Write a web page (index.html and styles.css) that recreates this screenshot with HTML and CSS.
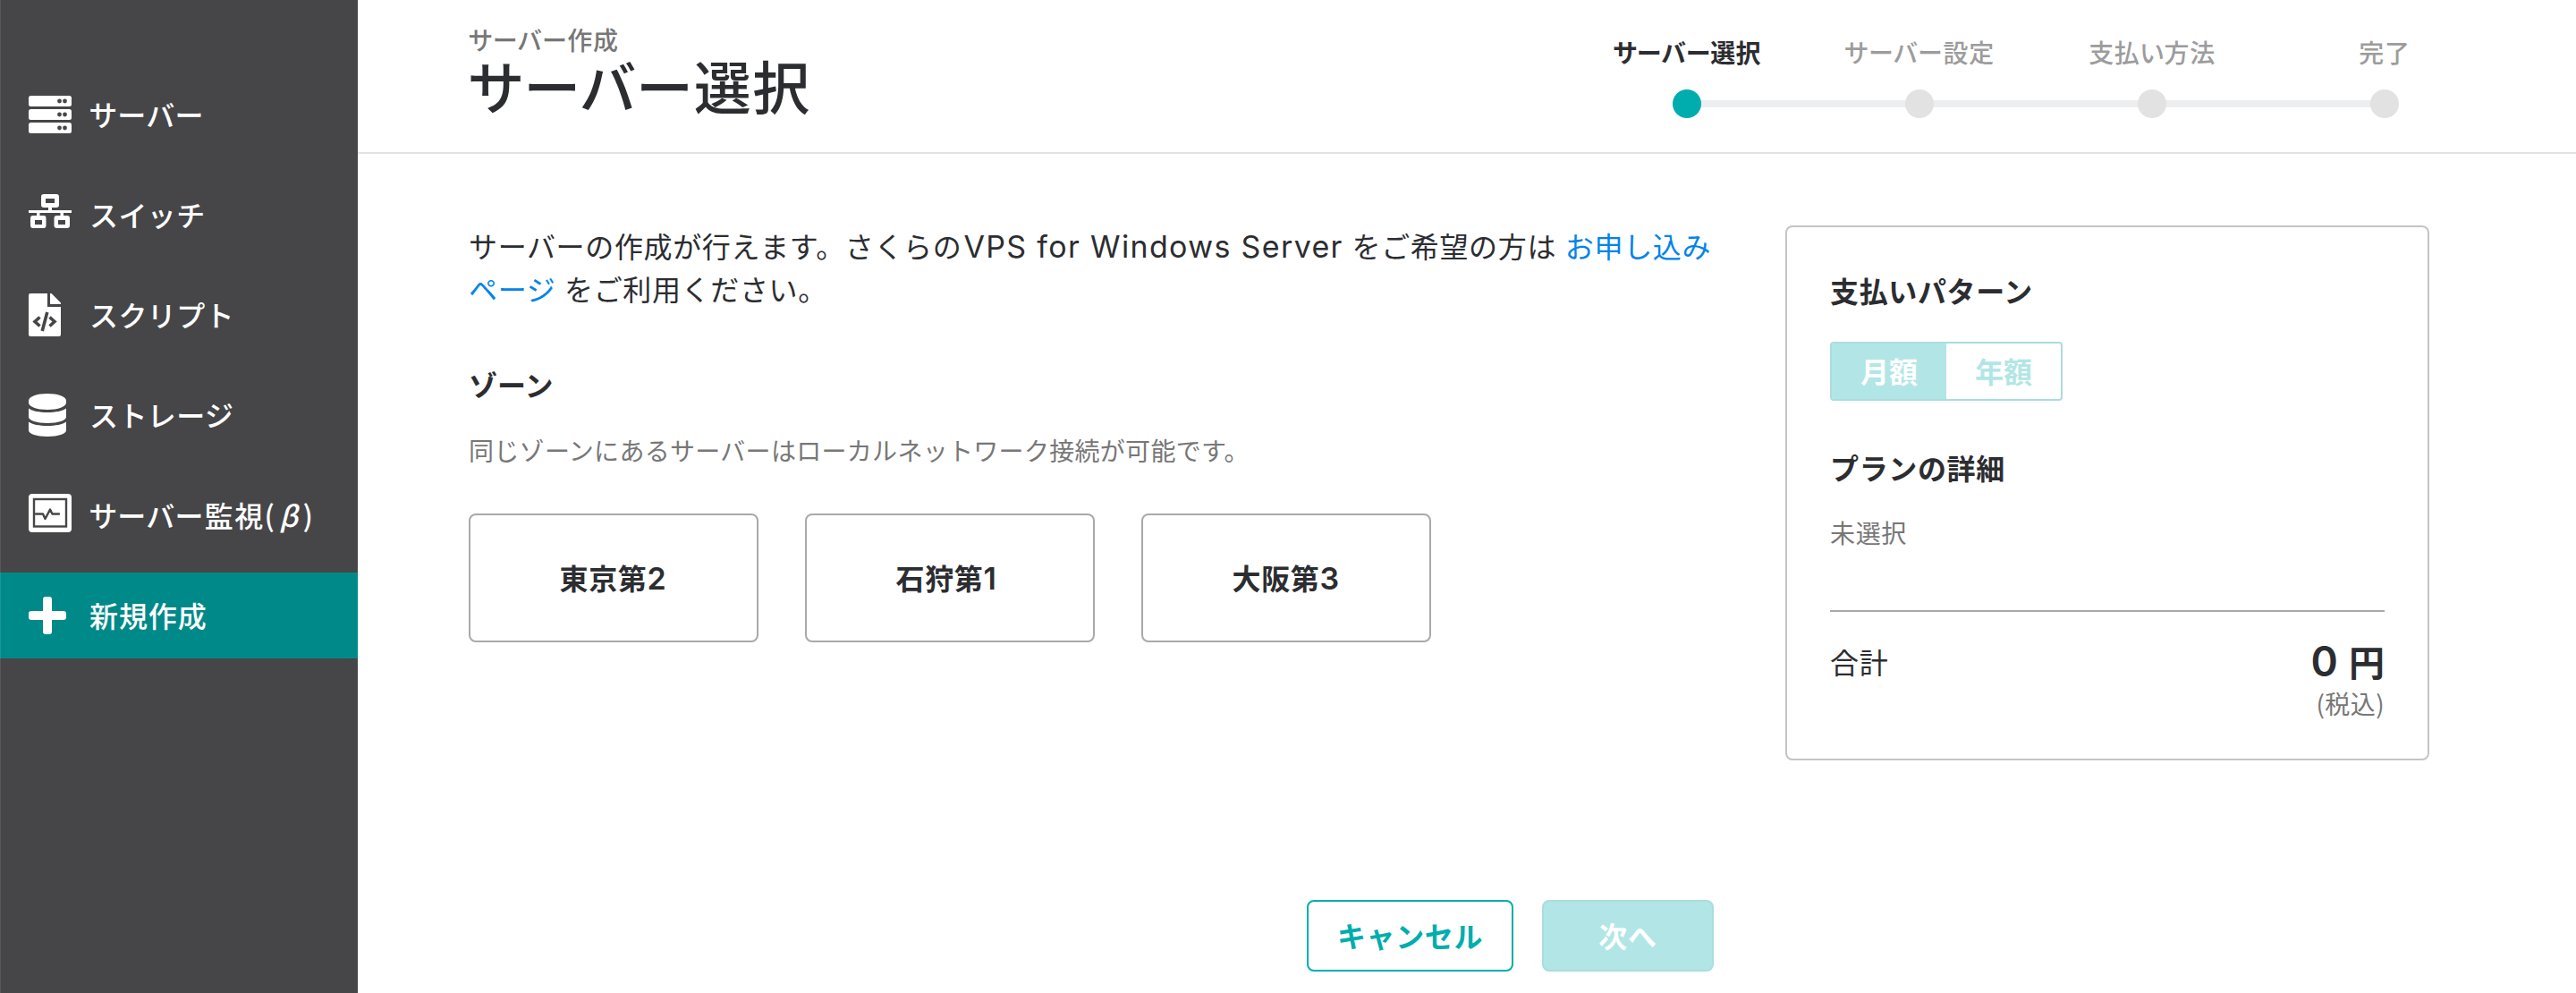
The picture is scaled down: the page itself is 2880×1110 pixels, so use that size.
FILE: index.html
```html
<!DOCTYPE html>
<html lang="ja">
<head>
<meta charset="utf-8">
<title>サーバー選択</title>
<link rel="stylesheet" href="styles.css">
</head>
<body>
<div class="app">
  <nav class="sidebar">
    <a class="nav-item"><span class="nav-icon"><svg width="48" height="42" viewBox="0 0 48 42"><g fill="#fff"><rect width="48" height="12" rx="2.5"/><rect y="15" width="48" height="12" rx="2.5"/><rect y="30" width="48" height="12" rx="2.5"/></g><g fill="#464648"><circle cx="34.5" cy="6" r="2.4"/><circle cx="40.5" cy="6" r="2.4"/><circle cx="34.5" cy="21" r="2.4"/><circle cx="40.5" cy="21" r="2.4"/><circle cx="34.5" cy="36" r="2.4"/><circle cx="40.5" cy="36" r="2.4"/></g></svg></span><span class="nav-label tight">サーバー</span></a>
    <a class="nav-item"><span class="nav-icon icon-switch"><svg width="48" height="38" viewBox="0 0 48 38"><path fill="#fff" fill-rule="evenodd" d="M17 0H31Q34 0 34 3V12Q34 15 31 15H26V18H48V21H39V24H43Q46 24 46 27V35Q46 38 43 38H31.500Q28.500 38 28.500 35V27Q28.500 24 31.500 24H35.500V21H12.500V24H17Q19.500 24 19.500 27V35Q19.500 38 17 38H5Q2 38 2 35V27Q2 24 5 24H9V21H0V18H22V15H17Q14 15 14 12V3Q14 0 17 0ZM19 5V10H29V5ZM7 29V34H15V29ZM33 29V34H41V29Z"/></svg></span><span class="nav-label">スイッチ</span></a>
    <a class="nav-item"><span class="nav-icon"><svg width="36" height="48" viewBox="0 0 36 48"><path fill="#fff" d="M2 0H21V15H36V46Q36 48 34 48H2Q0 48 0 46V2Q0 0 2 0ZM24 0H25.500L36 10.500V12H24Z"/><path fill="none" stroke="#464648" stroke-width="3.600" d="M12.500 26.500 7 31.500 12.500 36.500M23.500 26.500 29 31.500 23.500 36.500M20.800 21 15.200 42"/></svg></span><span class="nav-label">スクリプト</span></a>
    <a class="nav-item"><span class="nav-icon"><svg width="42" height="48" viewBox="0 0 42 48"><g fill="#fff"><path d="M0 8C0 3.500 9 0 21 0S42 3.500 42 8V10C42 14.500 33 18 21 18S0 14.500 0 10Z"/><path d="M0 16.500C4 19.500 12 21 21 21S38 19.500 42 16.500V26C42 30 33 33 21 33S0 30 0 26Z"/><path d="M0 31.500C4 34.500 12 36 21 36S38 34.500 42 31.500V41C42 45 33 48 21 48S0 45 0 41Z"/></g></svg></span><span class="nav-label">ストレージ</span></a>
    <a class="nav-item"><span class="nav-icon icon-monitor"><svg width="48" height="43" viewBox="0 0 48 43"><rect width="48" height="43" rx="4" fill="#fff"/><rect x="6" y="6" width="36" height="30.500" fill="none" stroke="#464648" stroke-width="2.400"/><path fill="none" stroke="#464648" stroke-width="2.400" stroke-linejoin="round" stroke-linecap="round" d="M8 22.500H16L18.500 28 24 17.500 26.500 22.500H34"/></svg></span><span class="nav-label tight">サーバー監視(<i class="beta">β</i>)</span></a>
    <a class="nav-item active"><span class="nav-icon"><svg width="42" height="42" viewBox="0 0 42 42"><path fill="#fff" d="M19 0H23Q26 0 26 3V16H39Q42 16 42 19V23Q42 26 39 26H26V39Q26 42 23 42H19Q16 42 16 39V26H3Q0 26 0 23V19Q0 16 3 16H16V3Q16 0 19 0Z"/></svg></span><span class="nav-label">新規作成</span></a>
  </nav>
  <div class="page">
    <header class="header">
      <div class="heading">
        <p class="crumb">サーバー作成</p>
        <h1 class="title">サーバー選択</h1>
      </div>
      <ol class="steps">
        <li class="step current">サーバー選択</li>
        <li class="step">サーバー設定</li>
        <li class="step">支払い方法</li>
        <li class="step">完了</li>
      </ol>
    </header>
    <div class="content">
      <main class="main">
        <p class="lead">サーバーの作成が行えます。さくらの<span class="latin">VPS for Windows Server</span> をご希望の方は <a class="link">お申し込み<br>ページ</a> をご利用ください。</p>
        <h2 class="section-title">ゾーン</h2>
        <p class="note">同じゾーンにあるサーバーはローカルネットワーク接続が可能です。</p>
        <div class="zones">
          <button class="zone">東京第<b class="digit">2</b></button>
          <button class="zone">石狩第<b class="digit">1</b></button>
          <button class="zone">大阪第<b class="digit">3</b></button>
        </div>
        <div class="actions">
          <button class="btn btn-cancel">キャンセル</button>
          <button class="btn btn-next">次へ</button>
        </div>
      </main>
      <aside class="summary">
        <h3 class="summary-title">支払いパターン</h3>
        <div class="toggle"><span class="toggle-option selected">月額</span><span class="toggle-option">年額</span></div>
        <h3 class="summary-title plan">プランの詳細</h3>
        <p class="unselected">未選択</p>
        <div class="total">
          <span class="total-label">合計</span>
          <div class="total-value">
            <p class="amount"><b class="zero">0</b> 円</p>
            <p class="tax">(税込)</p>
          </div>
        </div>
      </aside>
    </div>
  </div>
</div>
</body>
</html>
```
FILE: styles.css
```css
* { box-sizing: border-box; }
body, p, h1, h2, h3, ol { margin: 0; padding: 0; }
body {
  font-family: "Noto Sans CJK JP", sans-serif;
  font-size: 32px;
  line-height: 48px;
  letter-spacing: 0.02em;
  color: #2c2d31;
  background: #fff;
}
button { font: inherit; letter-spacing: inherit; color: inherit; padding: 0; }
.app { display: flex; height: 1110px; overflow: hidden; }
.sidebar {
  position: relative;
  width: 400px;
  flex: none;
  padding-top: 80px;
  display: flex;
  flex-direction: column;
  gap: 16px;
  background: #464648;
  color: #fff;
  font-weight: 500;
}
.sidebar::before { content: ""; position: absolute; left: 0; top: 0; bottom: 0; width: 1px; background: rgba(255, 255, 255, 0.1); }
.nav-item { display: flex; align-items: center; height: 96px; padding-left: 32px; white-space: nowrap; letter-spacing: 0.4px; }
.nav-icon { width: 68px; flex: none; display: flex; }
.nav-label { padding-bottom: 3px; }
.tight { font-feature-settings: "palt"; letter-spacing: 1.4px; }
.beta { margin: 0 4px; }
.nav-item.active { background: #008989; letter-spacing: 0.9px; }
.icon-switch { padding-bottom: 8px; }
.icon-monitor { padding-bottom: 5px; }
.page { flex: 1; }
.header {
  height: 172px;
  border-bottom: 2px solid #e2e2e2;
  display: flex;
  justify-content: space-between;
  padding: 20px 84px 0 124px;
  font-feature-settings: "palt";
}
.crumb { font-size: 28px; line-height: 48px; color: #777; font-weight: 500; }
.title { font-size: 64px; line-height: 64px; font-weight: 500; margin-top: -6px; letter-spacing: 1.4px; }
.steps { display: flex; list-style: none; font-size: 28px; font-weight: 500; color: #9c9c9c; padding-top: 14px; }
.step { width: 260px; display: flex; flex-direction: column; align-items: center; white-space: nowrap; }
.step::after {
  content: "";
  width: 260px;
  height: 32px;
  margin-top: 18px;
  background: radial-gradient(circle at 50% 50%, #e2e2e2 15.5px, transparent 16.5px), linear-gradient(#edeef0, #edeef0) 0 12px / 260px 8px no-repeat;
}
.step.current { color: #2c2d31; font-weight: 700; letter-spacing: 0.2px; }
.step.current::after { background: radial-gradient(circle at 50% 50%, #00adae 15.5px, transparent 16.5px), linear-gradient(#edeef0, #edeef0) 130px 12px / 130px 8px no-repeat; }
.step:last-child::after { background: radial-gradient(circle at 50% 50%, #e2e2e2 15.5px, transparent 16.5px), linear-gradient(#edeef0, #edeef0) 0 12px / 130px 8px no-repeat; }
.content { display: flex; align-items: flex-start; gap: 80px; padding: 80px 0 0 124px; }
.main { width: 1392px; flex: none; }
.lead { white-space: nowrap; word-spacing: 2px; margin-top: -2px; }
.latin { font-family: Inter, sans-serif; font-size: 34px; line-height: 1; word-spacing: 0; letter-spacing: 1.35px; margin-left: 2px; }
.link { color: #0084ea; }
.section-title { font-size: 32px; font-weight: 700; margin-top: 59px; letter-spacing: 0; }
.note { font-size: 28px; color: #777; margin-top: 26px; letter-spacing: 0.3px; }
.zones { display: flex; gap: 52px; margin-top: 47px; }
.zone { width: 324px; height: 144px; border: 2px solid #a9a9a9; border-radius: 8px; background: #fff; font-weight: 700; padding-bottom: 3px; }
.digit { display: inline-block; min-width: 23px; text-align: left; font-family: Inter, sans-serif; font-size: 34px; line-height: 1; font-weight: 600; }
.actions { display: flex; justify-content: flex-end; gap: 32px; margin-top: 288px; }
.btn { height: 80px; border-radius: 8px; font-weight: 700; border: 2px solid; padding-bottom: 3px; }
.btn-cancel { width: 231px; color: #00adae; border-color: #00adae; background: #fff; }
.btn-next { width: 192px; color: #fff; background: #b2e6e6; border-color: #acdcdc; }
.summary { width: 720px; height: 598px; border: 2px solid #c4c4c4; border-radius: 8px; padding: 46px 48px 0; }
.summary-title { font-size: 32px; font-weight: 700; }
.toggle { display: flex; width: 260px; height: 66px; margin-top: 34px; border: 2px solid #acdcdc; border-radius: 4px; overflow: hidden; letter-spacing: 0; font-weight: 700; color: #b2e6e6; }
.toggle-option { flex: 1; display: flex; align-items: center; justify-content: center; padding-bottom: 2px; }
.toggle-option.selected { background: #b2e6e6; color: #fff; }
.plan { margin-top: 50px; }
.unselected { font-size: 28px; color: #777; margin-top: 25px; }
.total { display: flex; justify-content: space-between; margin-top: 63px; border-top: 2px solid #a9a9a9; padding-top: 31px; }
.total-value { text-align: right; }
.amount { font-size: 40px; font-weight: 700; letter-spacing: 0; word-spacing: 3px; }
.zero { font-family: Inter, sans-serif; font-size: 46px; line-height: 1; font-weight: 600; }
.tax { font-size: 28px; color: #777; letter-spacing: 0.4px; margin-top: -1px; }
```
